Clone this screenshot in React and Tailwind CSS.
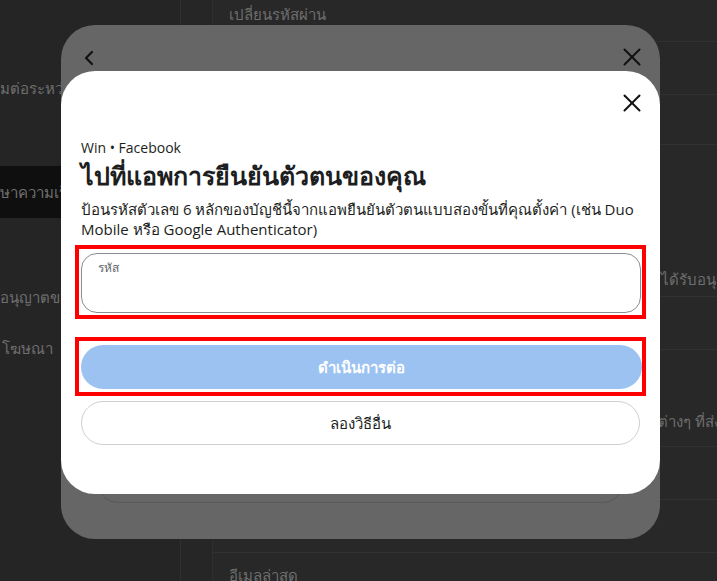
import { X, ChevronLeft } from 'lucide-react';

const font = { fontFamily: '"Open Sans", "Noto Sans", "Liberation Sans", sans-serif' };

const Background = () => (
  <div className="flex h-full w-full text-[15px] text-[#6e6e6e]">
    {/* left settings menu */}
    <div className="w-[180px] shrink-0 flex flex-col bg-[#252525]">
      <div className="h-[166px] pt-[77px] whitespace-nowrap leading-[22px]">มต่อระหว่างแอป</div>
      <div className="h-[52px] flex items-center bg-[#0f0f0f] whitespace-nowrap">
        <span>ษาความเป็นส่วนตัว</span>
      </div>
      <div className="h-[90px] flex items-end whitespace-nowrap leading-[22px]">อนุญาตของแอป</div>
      <div className="h-[51px] flex items-end pl-[2px] whitespace-nowrap leading-[22px]">โฆษณา</div>
    </div>
    <div className="w-[33px] shrink-0 border-l border-r border-[#2f2f2f] bg-[#262626]" />
    <div className="flex-1 flex flex-col bg-[#282828]">
      <div className="h-[42px] shrink-0 pl-[16px] pt-[3px] leading-[22px] border-b border-[#313131]">เปลี่ยนรหัสผ่าน</div>
      <div className="h-[53px] shrink-0 border-b border-[#313131]" />
      <div className="h-[50px] shrink-0 border-b border-[#313131]" />
      <div className="h-[152px] shrink-0 flex items-end justify-end pb-[6px] border-b border-[#313131] whitespace-nowrap overflow-hidden leading-[22px]">
        <span className="-mr-[30px]">ได้รับอนุญาต</span>
      </div>
      <div className="h-[53px] shrink-0 border-b border-[#313131]" />
      <div className="h-[97px] shrink-0 flex items-end justify-end pb-[14px] border-b border-[#313131] whitespace-nowrap overflow-hidden leading-[22px]">
        <span className="-mr-[4px]">ต่างๆ ที่ส่ง</span>
      </div>
      <div className="h-[53px] shrink-0 border-b border-[#313131]" />
      <div className="h-[53px] shrink-0 border-b border-[#313131]" />
      <div className="pl-[16px] pt-[11px] whitespace-nowrap leading-[22px]">อีเมลล่าสุด</div>
    </div>
  </div>
);

export default function App() {
  return (
    <div className="relative w-[717px] h-[581px] overflow-hidden bg-[#262626]" style={font}>
      <Background />

      {/* previous dialog, dimmed */}
      <div className="absolute left-[61px] top-[25px] w-[599px] h-[514px] rounded-[34px] bg-[#666666] px-[20px]">
        <div className="flex items-center justify-between h-[64px]">
          <ChevronLeft size={24} strokeWidth={2.2} className="text-[#111] -ml-[4px] mt-[2px]" />
          <X size={30} strokeWidth={1.6} className="text-[#111] -mr-[7px]" />
        </div>
        <div className="mt-[394px] h-[20px] mx-[17px] rounded-b-[20px] border border-t-0 border-[#5a5a5a]" />
      </div>

      {/* current dialog */}
      <div className="absolute left-[61px] top-[71px] w-[599px] h-[423px] rounded-[34px] bg-white px-[20px] text-[#1c1e21]">
        <div className="flex justify-end pt-[17px] h-[67px]">
          <X size={30} strokeWidth={1.6} className="text-[#111] -mr-[7px]" />
        </div>
        <div className="text-[14px] leading-[20px]">Win • Facebook</div>
        <h1 className="mt-[2px] text-[25px] leading-[30px] font-bold">ไปที่แอพการยืนยันตัวตนของคุณ</h1>
        <p className="mt-[9px] text-[15px] leading-[20px]">
          ป้อนรหัสตัวเลข 6 หลักของบัญชีนี้จากแอพยืนยันตัวตนแบบสองขั้นที่คุณตั้งค่า (เช่น Duo Mobile หรือ Google Authenticator)
        </p>

        <div className="mt-[6px] -mx-[6px] border-[4px] border-[#ff0000] pt-[4px] pb-[2px] pl-[2px] pr-[1px]">
          <label className="block h-[60px] rounded-[16px] border border-[#8a8d91] px-[16px] pt-[6px]">
            <span className="block text-[12px] leading-[16px] text-[#65676b]">รหัส</span>
            <input className="block w-full text-[16px] outline-none bg-transparent" />
          </label>
        </div>

        <div className="mt-[18px] -mx-[6px] border-[4px] border-[#ff0000] pt-[4px] pb-[3px] pl-[2px] pr-0">
          <button className="w-full h-[44px] rounded-full bg-[#9bc2f1] text-white text-[15px] font-bold">
            ดำเนินการต่อ
          </button>
        </div>

        <button className="mt-[5px] w-full h-[44px] rounded-full border border-[#ced0d4] text-[15px] font-normal text-[#1c1e21]">
          ลองวิธีอื่น
        </button>
      </div>
    </div>
  );
}
